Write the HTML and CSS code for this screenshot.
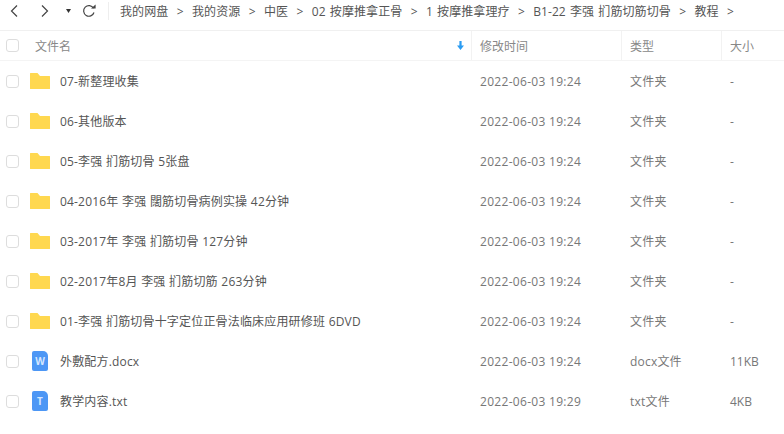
FILE: index.html
```html
<!DOCTYPE html>
<html lang="zh-CN">
<head>
    <meta charset="UTF-8">
    <meta name="viewport" content="width=device-width, initial-scale=1.0">
    <title>教程</title>
    <link rel="stylesheet" href="styles.css">
</head>
<body>
    <div class="toolbar">
        <svg class="nav-btn" width="14" height="16" viewBox="0 0 14 16"><path d="M11 2.500 5.500 8l5.500 5.500" /></svg>
        <svg class="nav-btn next" width="14" height="16" viewBox="0 0 14 16"><path d="M3 2.500 8.500 8 3 13.500" /></svg>
        <svg class="drop" width="5" height="4" viewBox="0 0 5 4"><path d="M0 0h5L2.500 4z" /></svg>
        <svg class="refresh" width="14" height="14" viewBox="0 0 14 14"><path class="arc" d="M11.500 4.200A5.300 5.300 0 1 0 12 8.500" /><path class="tip" d="M9 4.600h4.600V.6z" /></svg>
        <div class="divider"></div>
        <div class="crumbs">
            <span>我的网盘</span><i>&gt;</i>
            <span>我的资源</span><i>&gt;</i>
            <span>中医</span><i>&gt;</i>
            <span>02 按摩推拿正骨</span><i>&gt;</i>
            <span>1 按摩推拿理疗</span><i>&gt;</i>
            <span>B1-22 李强 扪筋切筋切骨</span><i>&gt;</i>
            <span>教程</span><i>&gt;</i>
        </div>
    </div>

    <div class="row head">
        <div class="cell-check"><span class="check"></span></div>
        <div class="cell-name title">文件名
            <svg class="sort" width="7" height="9" viewBox="0 0 7 9"><path d="M2.400 0h2.200v4.500H7L3.500 9 0 4.500h2.400z" /></svg>
        </div>
        <div class="cell-time">修改时间</div>
        <div class="cell-type">类型</div>
        <div class="cell-size">大小</div>
    </div>

    <div class="row">
        <div class="cell-check"><span class="check"></span></div>
        <div class="cell-name"><svg class="folder" width="20" height="16" viewBox="0 0 20 16"><path d="M.5 0h7l2.500 3h9.500a.5.500 0 0 1 .5.500v12a.5.500 0 0 1-.5.500H.5a.5.500 0 0 1-.5-.5V.5A.5.500 0 0 1 .5 0z" /></svg>07-新整理收集</div>
        <div class="cell-time">2022-06-03 19:24</div>
        <div class="cell-type">文件夹</div>
        <div class="cell-size">-</div>
    </div>
    <div class="row">
        <div class="cell-check"><span class="check"></span></div>
        <div class="cell-name"><svg class="folder" width="20" height="16" viewBox="0 0 20 16"><path d="M.5 0h7l2.500 3h9.500a.5.500 0 0 1 .5.500v12a.5.500 0 0 1-.5.500H.5a.5.500 0 0 1-.5-.5V.5A.5.500 0 0 1 .5 0z" /></svg>06-其他版本</div>
        <div class="cell-time">2022-06-03 19:24</div>
        <div class="cell-type">文件夹</div>
        <div class="cell-size">-</div>
    </div>
    <div class="row">
        <div class="cell-check"><span class="check"></span></div>
        <div class="cell-name"><svg class="folder" width="20" height="16" viewBox="0 0 20 16"><path d="M.5 0h7l2.500 3h9.500a.5.500 0 0 1 .5.500v12a.5.500 0 0 1-.5.500H.5a.5.500 0 0 1-.5-.5V.5A.5.500 0 0 1 .5 0z" /></svg>05-李强 扪筋切骨 5张盘</div>
        <div class="cell-time">2022-06-03 19:24</div>
        <div class="cell-type">文件夹</div>
        <div class="cell-size">-</div>
    </div>
    <div class="row">
        <div class="cell-check"><span class="check"></span></div>
        <div class="cell-name"><svg class="folder" width="20" height="16" viewBox="0 0 20 16"><path d="M.5 0h7l2.500 3h9.500a.5.500 0 0 1 .5.500v12a.5.500 0 0 1-.5.500H.5a.5.500 0 0 1-.5-.5V.5A.5.500 0 0 1 .5 0z" /></svg>04-2016年 李强 闊筋切骨病例实操 42分钟</div>
        <div class="cell-time">2022-06-03 19:24</div>
        <div class="cell-type">文件夹</div>
        <div class="cell-size">-</div>
    </div>
    <div class="row">
        <div class="cell-check"><span class="check"></span></div>
        <div class="cell-name"><svg class="folder" width="20" height="16" viewBox="0 0 20 16"><path d="M.5 0h7l2.500 3h9.500a.5.500 0 0 1 .5.500v12a.5.500 0 0 1-.5.500H.5a.5.500 0 0 1-.5-.5V.5A.5.500 0 0 1 .5 0z" /></svg>03-2017年 李强 扪筋切骨 127分钟</div>
        <div class="cell-time">2022-06-03 19:24</div>
        <div class="cell-type">文件夹</div>
        <div class="cell-size">-</div>
    </div>
    <div class="row">
        <div class="cell-check"><span class="check"></span></div>
        <div class="cell-name"><svg class="folder" width="20" height="16" viewBox="0 0 20 16"><path d="M.5 0h7l2.500 3h9.500a.5.500 0 0 1 .5.500v12a.5.500 0 0 1-.5.500H.5a.5.500 0 0 1-.5-.5V.5A.5.500 0 0 1 .5 0z" /></svg>02-2017年8月 李强 扪筋切筋 263分钟</div>
        <div class="cell-time">2022-06-03 19:24</div>
        <div class="cell-type">文件夹</div>
        <div class="cell-size">-</div>
    </div>
    <div class="row">
        <div class="cell-check"><span class="check"></span></div>
        <div class="cell-name"><svg class="folder" width="20" height="16" viewBox="0 0 20 16"><path d="M.5 0h7l2.500 3h9.500a.5.500 0 0 1 .5.500v12a.5.500 0 0 1-.5.500H.5a.5.500 0 0 1-.5-.5V.5A.5.500 0 0 1 .5 0z" /></svg>01-李强 扪筋切骨十字定位正骨法临床应用研修班 6DVD</div>
        <div class="cell-time">2022-06-03 19:24</div>
        <div class="cell-type">文件夹</div>
        <div class="cell-size">-</div>
    </div>
    <div class="row">
        <div class="cell-check"><span class="check"></span></div>
        <div class="cell-name"><span class="doc">W</span>外敷配方.docx</div>
        <div class="cell-time">2022-06-03 19:24</div>
        <div class="cell-type">docx文件</div>
        <div class="cell-size">11KB</div>
    </div>
    <div class="row">
        <div class="cell-check"><span class="check"></span></div>
        <div class="cell-name"><span class="doc">T</span>教学内容.txt</div>
        <div class="cell-time">2022-06-03 19:29</div>
        <div class="cell-type">txt文件</div>
        <div class="cell-size">4KB</div>
    </div>
</body>
</html>
```
FILE: styles.css
```css
body {
    margin: 0;
    background: #fff;
    color: #666;
    font-family: "Open Sans", "Noto Sans CJK SC", sans-serif;
    font-size: 12px;
    overflow: hidden;
}
.toolbar {
    display: flex;
    align-items: center;
    box-sizing: content-box;
    height: 22px;
    padding: 0 0 8px 6px;
    border-bottom: 1px solid #f0f0f0;
    color: #555;
}
.nav-btn path {
    fill: none;
    stroke: #444;
    stroke-width: 1.2;
}
.nav-btn.next {
    margin-left: 19px;
}
.drop {
    margin-left: 13px;
    fill: #333;
}
.refresh {
    margin-left: 11px;
}
.refresh .arc {
    fill: none;
    stroke: #444;
    stroke-width: 1.2;
}
.refresh .tip {
    fill: #444;
}
.divider {
    width: 1px;
    height: 18px;
    background: #eee;
    margin: 0 11px 0 12px;
}
.crumbs {
    display: flex;
    align-items: center;
    white-space: nowrap;
    letter-spacing: .08px;
    word-spacing: 1px;
}
.crumbs i {
    font-style: normal;
    margin: 0 8.350px;
    color: #555;
}
.row {
    display: flex;
    align-items: center;
    height: 40px;
}
.head {
    height: 29px;
    border-bottom: 1px solid #f4f4f4;
    color: #888;
}
.cell-check {
    width: 30px;
    padding-left: 6px;
    box-sizing: border-box;
}
.check {
    display: block;
    width: 11px;
    height: 11px;
    border: 1px solid #ddd;
    border-radius: 3px;
}
.cell-name {
    width: 441px;
    display: flex;
    align-items: center;
    color: #555;
    box-sizing: border-box;
    letter-spacing: .17px;
    word-spacing: .3px;
}
.title {
    color: #888;
    padding-left: 5px;
    padding-right: 7px;
    justify-content: space-between;
    letter-spacing: 0;
}
.sort {
    fill: #2b9cf2;
}
.folder {
    fill: #ffd84f;
    margin-right: 10px;
}
.doc {
    width: 16px;
    height: 20px;
    margin: 0 12px 0 2px;
    border-radius: 2px 5px 2px 2px;
    background: #4d97f5;
    color: #d6e7ff;
    font-weight: 700;
    font-size: 10px;
    text-align: center;
    line-height: 20px;
    letter-spacing: 0;
}
.cell-time,
.cell-type,
.cell-size {
    box-sizing: border-box;
    padding-left: 9px;
    height: 100%;
    display: flex;
    align-items: center;
    color: #777;
}
.cell-time {
    width: 150px;
    letter-spacing: .3px;
}
.cell-type {
    width: 100px;
    letter-spacing: .2px;
}
.cell-size {
    width: 63px;
}
.head .cell-time,
.head .cell-type,
.head .cell-size {
    border-left: 1px solid #f2f2f2;
    padding-left: 8px;
    color: #888;
    letter-spacing: 0;
}
```
